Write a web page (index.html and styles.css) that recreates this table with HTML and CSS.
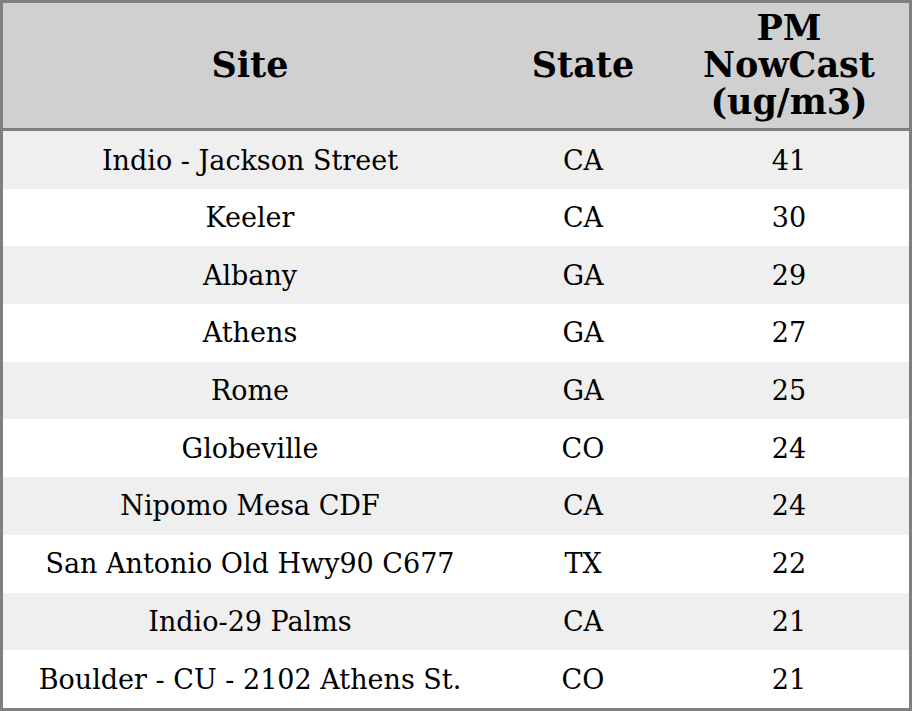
FILE: index.html
```
<!DOCTYPE html>
<html>
<head>
<meta charset="utf-8">
<link rel="stylesheet" href="styles.css">
</head>
<body>
<table class="aq">
<thead>
<tr><th class="c-site">Site</th><th class="c-state">State</th><th class="c-pm">PM NowCast (ug/m3)</th></tr>
</thead>
<tbody>
<tr><td>Indio - Jackson Street</td><td>CA</td><td>41</td></tr>
<tr><td>Keeler</td><td>CA</td><td>30</td></tr>
<tr><td>Albany</td><td>GA</td><td>29</td></tr>
<tr><td>Athens</td><td>GA</td><td>27</td></tr>
<tr><td>Rome</td><td>GA</td><td>25</td></tr>
<tr><td>Globeville</td><td>CO</td><td>24</td></tr>
<tr><td>Nipomo Mesa CDF</td><td>CA</td><td>24</td></tr>
<tr><td>San Antonio Old Hwy90 C677</td><td>TX</td><td>22</td></tr>
<tr><td>Indio-29 Palms</td><td>CA</td><td>21</td></tr>
<tr><td>Boulder - CU - 2102 Athens St.</td><td>CO</td><td>21</td></tr>
</tbody>
</table>
</body>
</html>
```
FILE: styles.css
```
html, body { margin: 0; padding: 0; background: #fff; }
body { font-family: "DejaVu Serif", serif; color: #000; }
.aq {
  border-collapse: separate;
  border-spacing: 0;
  border: 3px solid #808080;
  width: 912px;
  height: 711px;
  box-sizing: border-box;
  table-layout: fixed;
}
.aq th {
  background: #d0d0d0;
  font-size: 35px;
  font-weight: bold;
  text-align: center;
  border-bottom: 3px solid #808080;
  height: 128px;
  padding: 0 12px 2px;
  line-height: 37px;
  box-sizing: border-box;
}
.c-site { width: 494px; }
.c-state { width: 172px; }
.c-pm { width: 240px; }
.aq td {
  font-size: 27px;
  text-align: center;
  padding: 0;
  height: 57px;
  line-height: 31px;
}
.aq tbody tr:first-child td { height: 56px; padding-top: 1px; }
.aq tbody tr:nth-child(odd) td { background: #efefef; }
.aq tbody tr:nth-child(even) td { background: #fff; }
```
